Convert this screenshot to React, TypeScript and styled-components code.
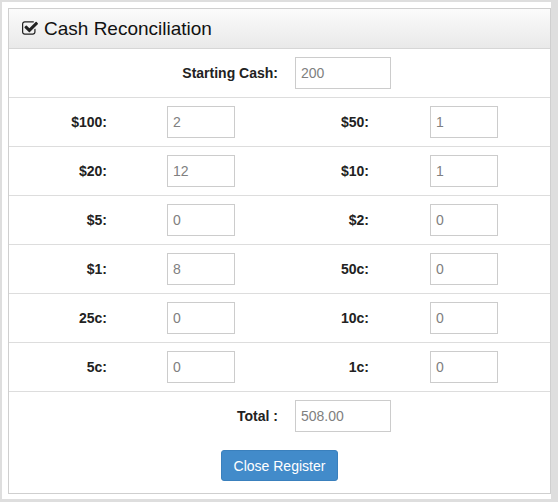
import React from "react";
import styled, { createGlobalStyle } from "styled-components";

const Global = createGlobalStyle`
  html, body { margin: 0; padding: 0; background: #dedede; }
  body { font-family: "Liberation Sans", Arial, sans-serif; color: #333; }
  * { box-sizing: border-box; }
`;

const Frame = styled.div`
  margin: 2px 0 0 2px;
  width: 549px;
  height: 497px;
  background: #fff;
  padding: 6px 0 4px 6px;
`;

const Panel = styled.div`
  width: 543px;
  border: 1px solid #cfcfcf;
  background: #fff;
`;

const Heading = styled.div`
  height: 40px;
  display: flex;
  align-items: center;
  gap: 6px;
  padding: 0 13px 1px 13px;
  background: linear-gradient(to bottom, #fbfbfb, #e9e9e9);
  border-bottom: 1px solid #d6d6d6;
`;

const Title = styled.h3`
  margin: 0;
  font-size: 19px;
  font-weight: normal;
  color: #111;
  line-height: 1;
`;

const PairRow = styled.div<{ $border?: boolean }>`
  display: grid;
  grid-template-columns: 269px 1fr;
  column-gap: 17px;
  align-items: center;
  padding: 8px 0;
  border-bottom: ${(p) => (p.$border ? "1px solid #dddddd" : "none")};
`;

const DenomRow = styled.div`
  display: grid;
  grid-template-columns: 128px 142px 120px 151px;
  align-items: center;
  padding: 8px 0;
  border-bottom: 1px solid #dddddd;
`;

const Label = styled.label<{ $pad?: number }>`
  text-align: right;
  font-weight: bold;
  font-size: 14px;
  color: #222;
  padding-right: ${(p) => p.$pad ?? 0}px;
`;

const Cell = styled.div<{ $pad: number }>`
  padding-left: ${(p) => p.$pad}px;
`;

const Field = styled.input<{ $w: number }>`
  display: block;
  width: ${(p) => p.$w}px;
  height: 32px;
  border: 1px solid #cccccc;
  border-radius: 0;
  padding: 0 5px;
  font-family: "Liberation Sans", Arial, sans-serif;
  font-size: 14px;
  color: #808080;
  background: #fff;
  outline: none;
`;

const Footer = styled.div`
  padding-bottom: 12px;
  display: flex;
  flex-direction: column;
  align-items: center;
  gap: 10px;
`;

const FooterRow = styled(PairRow)`
  width: 100%;
`;

const Button = styled.button`
  height: 31px;
  padding: 0 12px;
  background: #428bca;
  border: 1px solid #3a80bd;
  border-radius: 3px;
  color: #fff;
  font-family: "Liberation Sans", Arial, sans-serif;
  font-size: 14px;
  cursor: pointer;
`;

const CheckIcon = () => (
  <svg width="16" height="14" viewBox="64 128 1664 1408" style={{ flex: "none" }}>
    <path
      fill="#222"
      d="M1472 930v318q0 119-84.5 203.5t-203.5 84.5h-832q-119 0-203.5-84.5t-84.5-203.5v-832q0-119 84.5-203.5t203.5-84.5h832q63 0 117 25 15 7 18 23 3 17-9 29l-49 49q-10 10-23 10-3 0-9-2-23-6-45-6h-832q-66 0-113 47t-47 113v832q0 66 47 113t113 47h832q66 0 113-47t47-113v-254q0-13 9-22l64-64q10-10 23-10 6 0 12 3 20 8 20 29zm231-489l-814 814q-24 24-57 24t-57-24l-430-430q-24-24-24-57t24-57l110-110q24-24 57-24t57 24l263 263 647-647q24-24 57-24t57 24l110 110q24 24 24 57t-24 57z"
    />
  </svg>
);

const rows: [string, string, string, string][] = [
  ["$100:", "2", "$50:", "1"],
  ["$20:", "12", "$10:", "1"],
  ["$5:", "0", "$2:", "0"],
  ["$1:", "8", "50c:", "0"],
  ["25c:", "0", "10c:", "0"],
  ["5c:", "0", "1c:", "0"],
];

export default function App() {
  return (
    <>
      <Global />
      <Frame>
        <Panel>
          <Heading>
            <CheckIcon />
            <Title>Cash Reconciliation</Title>
          </Heading>
          <PairRow $border>
            <Label $pad={0}>Starting Cash:</Label>
            <div>
              <Field $w={96} defaultValue="200" />
            </div>
          </PairRow>
          {rows.map(([l1, v1, l2, v2]) => (
            <DenomRow key={l1}>
              <Label $pad={30}>{l1}</Label>
              <Cell $pad={30}>
                <Field $w={68} defaultValue={v1} />
              </Cell>
              <Label $pad={30}>{l2}</Label>
              <Cell $pad={31}>
                <Field $w={68} defaultValue={v2} />
              </Cell>
            </DenomRow>
          ))}
          <Footer>
            <FooterRow>
              <Label>Total :</Label>
              <div>
                <Field $w={96} defaultValue="508.00" />
              </div>
            </FooterRow>
            <Button>Close Register</Button>
          </Footer>
        </Panel>
      </Frame>
    </>
  );
}
